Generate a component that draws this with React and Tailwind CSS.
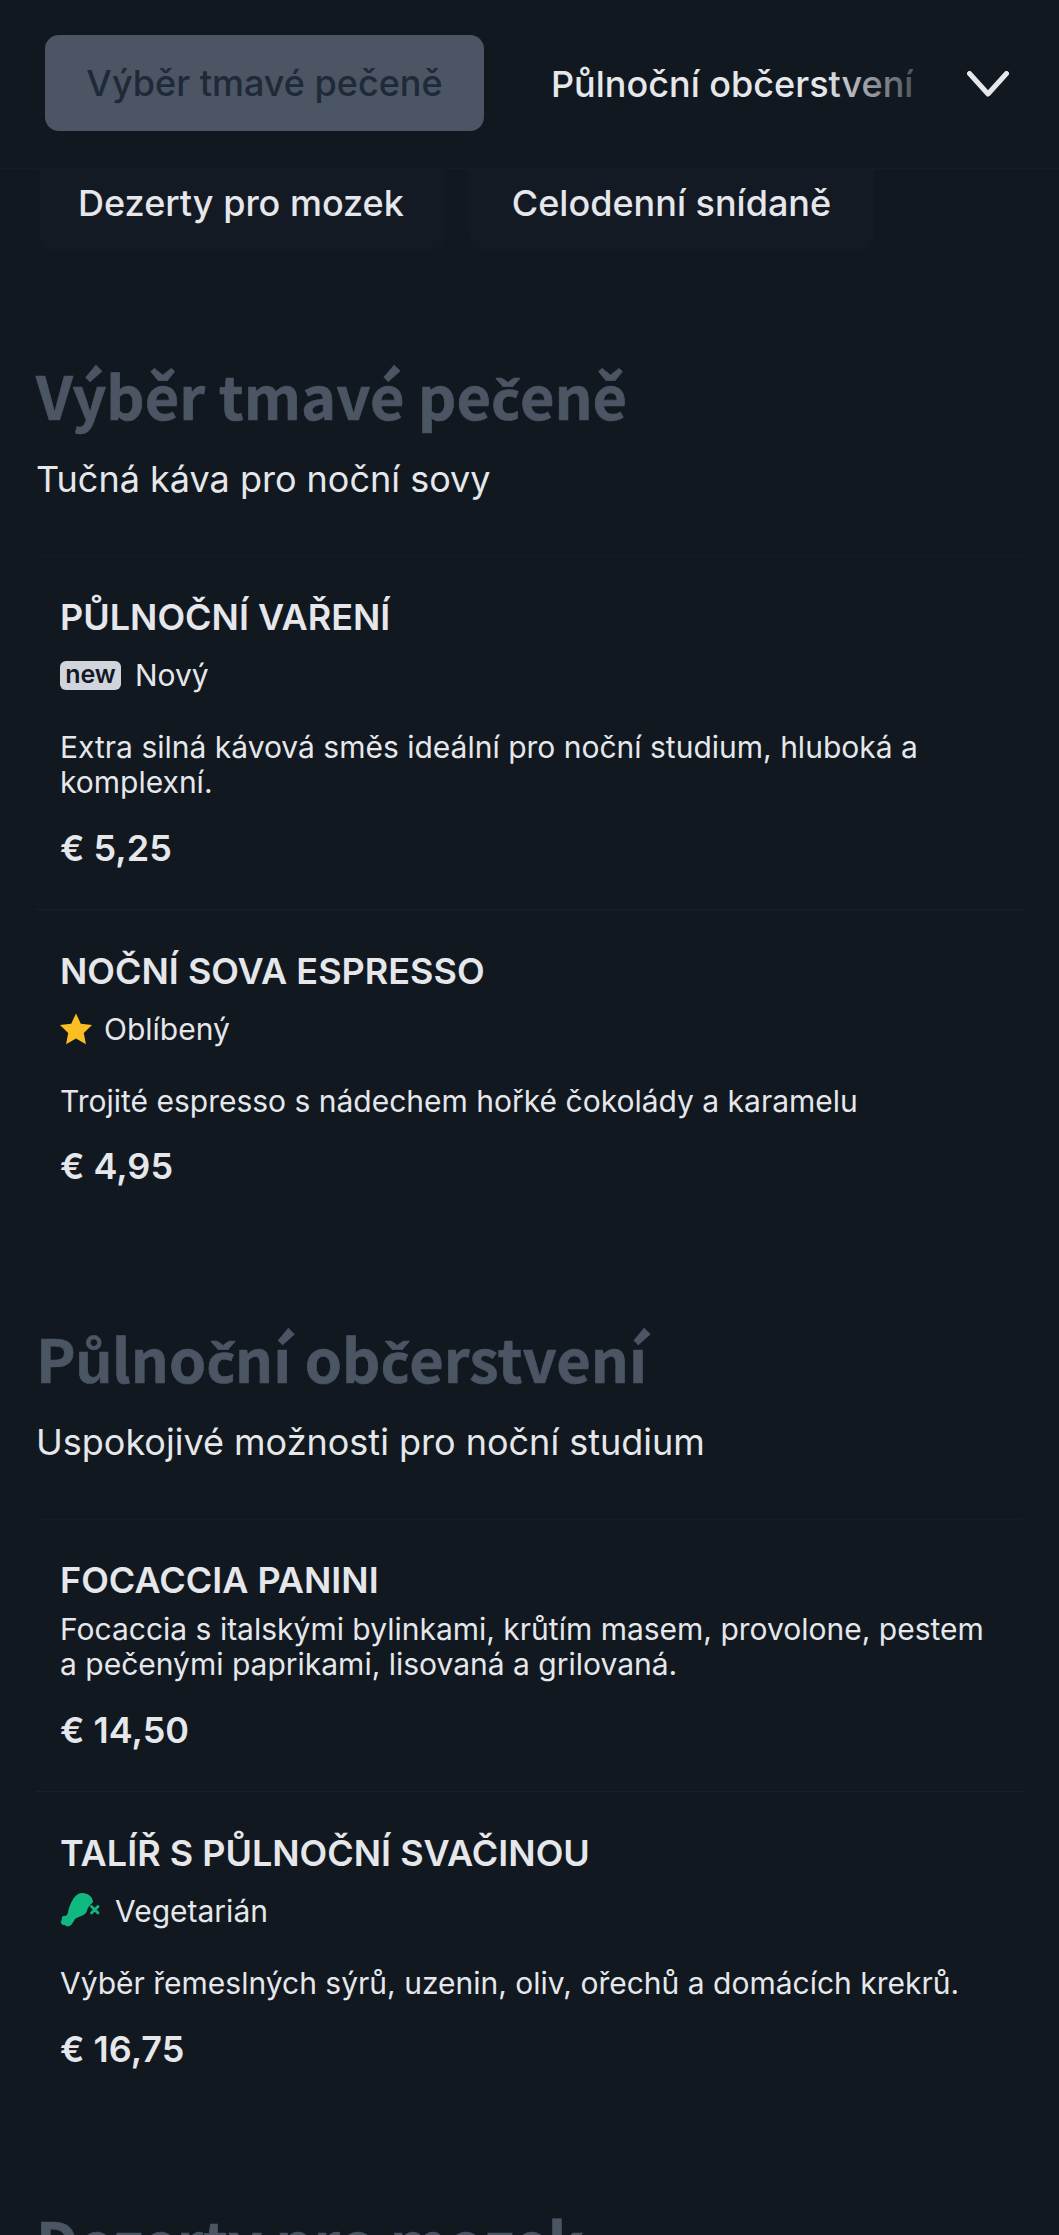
import React from "react";

function Star() {
  return (
    <svg viewBox="0 0 24 24" className="w-[36px] h-[36px] -ml-[2px] shrink-0 fill-[#fbbf24]">
      <path d="M12 1.6l3.2 6.9 7.5.9-5.5 5.2 1.4 7.5L12 18.4l-6.6 3.7 1.4-7.5L1.3 9.4l7.5-.9z" />
    </svg>
  );
}

function Leg() {
  return (
    <svg viewBox="0 0 42 36" className="w-[42px] h-[36px] shrink-0">
      <path className="fill-[#10b981]" d="M22 0C28 0 33 4 33 9C31 12 28 13 27 18C25 23 19 23 15 26L12 31C10 34 6 34 5 32C2 33 -1 29 2 27C1 24 3 22 6 23L8 20C9 13 14 0 22 0Z" />
      <path className="stroke-[#10b981]" strokeWidth="2.8" strokeLinecap="round" d="M31.5 13.5L38 20M38 13.5L31.5 20" />
    </svg>
  );
}

function Tag({ icon, label, gap }) {
  return (
    <div className={`flex items-center ${gap} h-[40px] text-[30px] leading-[40px] text-[#e5e7eb]`}>
      {icon}
      <span>{label}</span>
    </div>
  );
}

function Item({ title, tag, desc, price, first, pt, tagClass, descClass, priceClass = "mt-[26px]" }) {
  return (
    <div className={`px-[24px] ${pt} ${first ? "border-t border-[#151c25]" : "border-t border-[#19202a]"}`}>
      <h3 className="text-[36px] leading-[44px] font-semibold text-[#e5e7eb]">{title}</h3>
      {tag && <div className={tagClass}>{tag}</div>}
      <p className={`text-[30px] leading-[35px] text-[#e5e7eb] ${descClass}`}>{desc}</p>
      <div className={`text-[36px] leading-[44px] font-semibold text-[#e5e7eb] ${priceClass}`}>{price}</div>
    </div>
  );
}

const CCaron = () => <span className="[font-family:'Noto_Sans',sans-serif] text-[56px] leading-none">č</span>;

function SectionHead({ title, sub, className }) {
  return (
    <div className={className}>
      <h2 className="h-[80px] [font-family:'Noto_Sans_CJK_SC',sans-serif] text-[59.5px] leading-[80px] font-bold [-webkit-text-stroke:0.7px_#4b5563] text-[#4b5563]">{title}</h2>
      {sub && <p className="mt-[21px] text-[36px] leading-[48px] text-[#e5e7eb]">{sub}</p>}
    </div>
  );
}

export default function App() {
  return (
    <div className="h-[2235px] overflow-hidden bg-[#111820] [font-family:Inter,sans-serif]">
      <header className="h-[169px] flex items-center pl-[45px] pr-[50px] pb-[1px] border-b border-[#151c25]">
        <button className="w-[439px] h-[96px] -mt-[1px] shrink-0 rounded-[14px] bg-[#4b5563] text-[36px] font-medium text-[#1f2937]">
          Výběr tmavé pečeně
        </button>
        <div className="relative ml-[67px] w-[362px] overflow-hidden whitespace-nowrap text-[36px] font-medium text-[#e5e7eb]">
          Půlnoční občerstvení
          <div className="absolute inset-y-0 right-0 w-[90px] bg-gradient-to-r from-transparent to-[#111820]/70" />
        </div>
        <svg viewBox="0 0 42 26" fill="none" className="ml-auto w-[42px] h-[26px] text-[#e5e7eb]">
          <path d="M2.5 2.5L21 23L39.5 2.5" stroke="currentColor" strokeWidth="5" strokeLinecap="round" strokeLinejoin="round" />
        </svg>
      </header>

      <div className="h-[81px] flex gap-[24px] pl-[39px]">
        <div className="w-[406px] pb-[14px] pr-[2px] flex items-center justify-center rounded-b-[14px] bg-[#141a24] text-[36px] font-medium text-[#e5e7eb]">
          Dezerty pro mozek
        </div>
        <div className="w-[405px] pb-[14px] flex items-center justify-center rounded-b-[14px] bg-[#141a24] text-[36px] font-medium text-[#e5e7eb]">
          Celodenní snídaně
        </div>
      </div>

      <main className="px-[36px]">
        <SectionHead className="pt-[104px]" title={<>Výběr tmavé pe<CCaron />eně</>} sub="Tučná káva pro noční sovy" />

        <div className="mt-[53px]">
          <Item
            first
            pt="pt-[38px]"
            title="PŮLNOČNÍ VAŘENÍ"
            tagClass="mt-[16px]"
            descClass="mt-[35px]"
            tag={
              <Tag
                gap="gap-[14px]"
                label="Nový"
                icon={
                  <span className="flex items-center justify-center w-[61px] h-[29px] rounded-[6px] bg-[#d1d5db] text-[25px] leading-none font-semibold text-[#111827] pb-[2px]">
                    new
                  </span>
                }
              />
            }
            desc="Extra silná kávová směs ideální pro noční studium, hluboká a komplexní."
            price="€ 5,25"
          />
          <div className="h-[39px]" />
          <Item
            pt="pt-[39px]"
            title="NOČNÍ SOVA ESPRESSO"
            tagClass="mt-[16px]"
            descClass="mt-[35px]"
            priceClass="mt-[25px]"
            tag={<Tag gap="gap-[10px]" label="Oblíbený" icon={<Star />} />}
            desc="Trojité espresso s nádechem hořké čokolády a karamelu"
            price="€ 4,95"
          />
        </div>

        <SectionHead className="pt-[129px]" title={<>Půlno<CCaron />ní ob<CCaron />erstvení</>} sub="Uspokojivé možnosti pro noční studium" />

        <div className="mt-[53px]">
          <Item
            first
            pt="pt-[38px]"
            title="FOCACCIA PANINI"
            descClass="mt-[10px]"
            desc="Focaccia s italskými bylinkami, krůtím masem, provolone, pestem a pečenými paprikami, lisovaná a grilovaná."
            price="€ 14,50"
          />
          <div className="h-[39px]" />
          <Item
            pt="pt-[39px]"
            title="TALÍŘ S PŮLNOČNÍ SVAČINOU"
            tagClass="mt-[16px]"
            descClass="mt-[35px]"
            tag={<Tag gap="gap-[13px]" label="Vegetarián" icon={<Leg />} />}
            desc="Výběr řemeslných sýrů, uzenin, oliv, ořechů a domácích krekrů."
            price="€ 16,75"
          />
        </div>

        <SectionHead className="pt-[129px]" title="Dezerty pro mozek" />
      </main>
    </div>
  );
}
